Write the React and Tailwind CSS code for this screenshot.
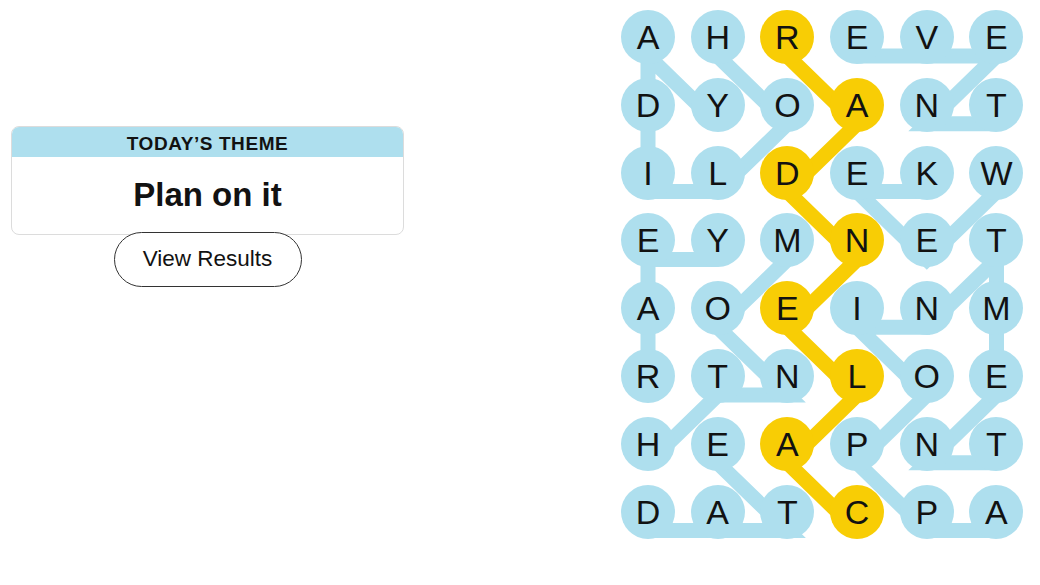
import React from "react";

const GRID = [
	"AHREVE",
	"DYOANT",
	"ILDEKW",
	"EYMNET",
	"AOEINM",
	"RTNLOE",
	"HEAPNT",
	"DATCPA",
];

// found words, as [row, col] steps
const WORDS = [
	[[0, 1], [1, 2], [2, 1], [2, 0], [1, 0], [0, 0], [1, 1]],
	[[0, 3], [0, 4], [0, 5], [1, 4], [1, 5]],
	[[2, 5], [3, 4], [2, 3], [2, 4]],
	[[3, 1], [3, 0], [4, 0], [5, 0]],
	[[3, 2], [4, 1], [5, 2], [5, 1], [6, 0]],
	[[7, 5], [7, 4], [6, 3], [5, 4], [4, 3], [4, 4], [3, 5], [4, 5], [5, 5], [6, 4], [6, 5]],
	[[7, 0], [7, 1], [7, 2], [6, 1]],
];

const SPANGRAM = [[7, 3], [6, 2], [5, 3], [4, 2], [3, 3], [2, 2], [1, 3], [0, 2]];

const toPoints = (path) =>
	path.map(([r, c]) => `${27 + c * 69.7},${27 + r * 67.8 + 19}`).join(" ");

const isSpangram = (r, c) => SPANGRAM.some(([sr, sc]) => sr === r && sc === c);

const App = () => {
	return (
		<div
			className="flex w-[1040px] h-[585px] bg-white text-[#121212]"
			style={{ fontFamily: '"Liberation Sans", Arial, sans-serif' }}
		>
			{/* Theme panel */}
			<div className="w-[621px] pl-[11px] pt-[126px]">
				<div className="w-[393px] flex flex-col items-center">
					<div className="w-full rounded-lg border border-[#dcdcdc] bg-white overflow-hidden">
						<div className="h-[30px] bg-[#aedfee] flex items-center justify-center text-[19px] font-bold tracking-[0.03em] leading-none pt-[2px]">
							TODAY’S THEME
						</div>
						<div className="h-[77px] flex items-center justify-center text-[33px] font-bold leading-none pb-[3px]">
							Plan on it
						</div>
					</div>
					<button className="-mt-[3px] w-[188px] h-[55px] rounded-full border border-[#333] bg-white text-[22.5px] leading-none">
						View Results
					</button>
				</div>
			</div>

			{/* Letter board */}
			<div className="pt-[10px]">
				<div className="relative">
					<svg
						className="absolute inset-0"
						width="403"
						height="560"
						viewBox="0 0 403 560"
					>
						{WORDS.map((w, i) => (
							<polyline
								key={i}
								points={toPoints(w)}
								fill="none"
								stroke="#aedfee"
								strokeWidth="15"
								strokeLinejoin="miter"
							/>
						))}
						<polyline
							points={toPoints(SPANGRAM)}
							fill="none"
							stroke="#f8cd05"
							strokeWidth="15"
							strokeLinejoin="miter"
						/>
					</svg>
					<div className="relative grid grid-cols-6 gap-x-[15.7px] gap-y-[13.8px]">
						{GRID.map((row, r) =>
							row.split("").map((ch, c) => (
								<div
									key={`${r}-${c}`}
									className={`w-[54px] h-[54px] rounded-full flex items-center justify-center text-[34px] leading-none ${
										isSpangram(r, c) ? "bg-[#f8cd05]" : "bg-[#aedfee]"
									}`}
								>
									{ch}
								</div>
							))
						)}
					</div>
				</div>
			</div>
		</div>
	);
};

export default App;
